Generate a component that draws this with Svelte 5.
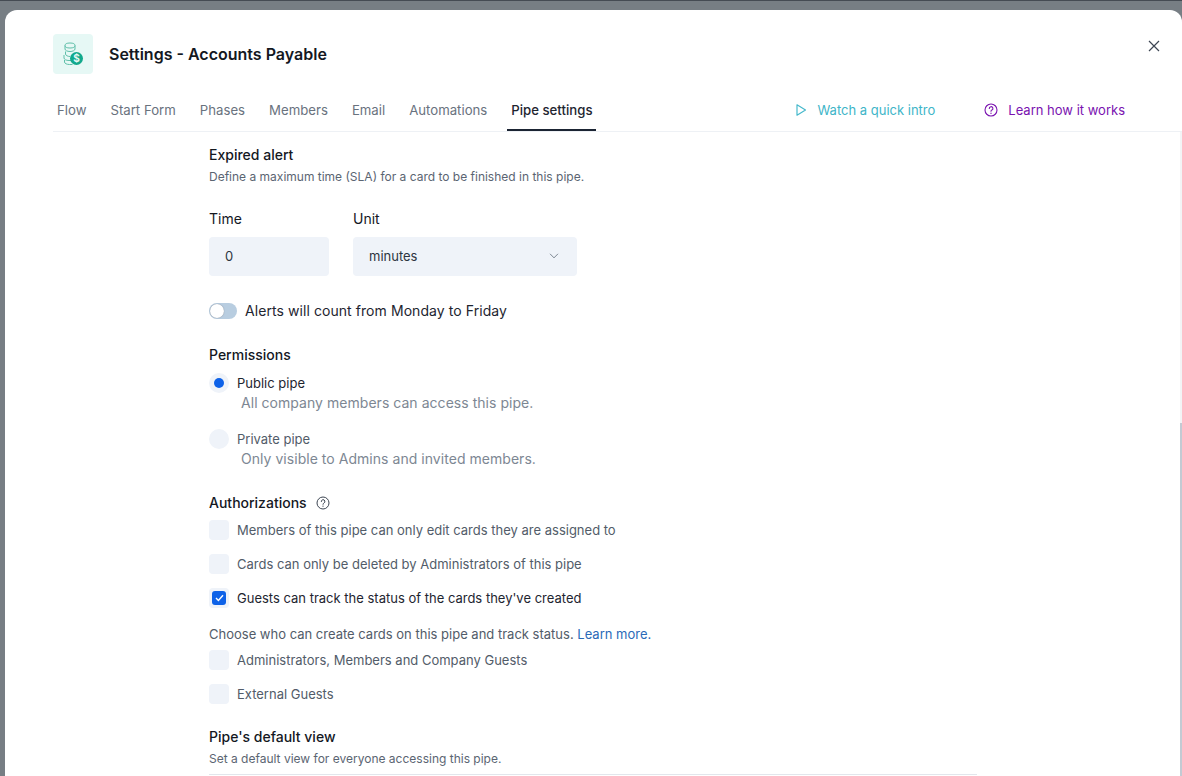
<script lang="ts">
  const tabs = ['Flow', 'Start Form', 'Phases', 'Members', 'Email', 'Automations', 'Pipe settings'];
  const active = 'Pipe settings';
  const topChecks = [
    { label: 'Members of this pipe can only edit cards they are assigned to', on: false },
    { label: 'Cards can only be deleted by Administrators of this pipe', on: false },
    { label: "Guests can track the status of the cards they've created", on: true }
  ];
  const createChecks = ['Administrators, Members and Company Guests', 'External Guests'];
</script>

<div class="backdrop">
  <div class="modal">
    <header class="head">
      <div class="title-row">
        <div class="logo">
          <svg width="24" height="24" viewBox="0 0 24 24" fill="none">
            <g stroke="#5fbfa9" stroke-width="1">
              <ellipse cx="9" cy="3.5" rx="5" ry="2.5" fill="#e6f8f5" />
              <path d="M4 3.5v3.5c0 1.4 2.2 2.5 5 2.5s5-1.1 5-2.5V3.5" />
              <path d="M4.5 9.5v2.5c0 1.4 2.2 2.5 4.5 2.5" />
              <path d="M3 13v3c0 1.4 2.2 2.5 5 2.5h2" />
              <path d="M3.5 18v2c0 1.4 2.2 2.5 5 2.5h3" />
            </g>
            <circle cx="15.5" cy="16.5" r="6.5" fill="#12a98c" />
            <text x="15.5" y="20" text-anchor="middle" class="dollar">$</text>
          </svg>
        </div>
        <h1>Settings - Accounts Payable</h1>
      </div>
      <button class="close" aria-label="Close">
        <svg width="12" height="12" viewBox="0 0 12 12" fill="none" stroke="#3d4653" stroke-width="1.2">
          <path d="M1 1l10 10M11 1L1 11" />
        </svg>
      </button>
      <nav class="tabs">
        {#each tabs as tab}
          <span class="tab" class:active={tab === active}>{tab}</span>
        {/each}
        <span class="spacer"></span>
        <span class="help intro">
          <svg width="12" height="14" viewBox="0 0 12 14" fill="none" stroke="#47b9cc" stroke-width="1.2" stroke-linejoin="round">
            <path d="M2 1.8v10.4L10.5 7z" />
          </svg>
          Watch a quick intro
        </span>
        <span class="help learn">
          <svg width="14" height="14" viewBox="0 0 14 14" fill="none" stroke="#7a12b0" stroke-width="1.1">
            <circle cx="7" cy="7" r="6" />
            <path d="M5.3 5.5a1.8 1.8 0 1 1 2.6 1.6c-.6.3-.9.7-.9 1.2" stroke-linecap="round" />
            <path d="M7 10v.4" stroke-linecap="round" />
          </svg>
          Learn how it works
        </span>
      </nav>
    </header>

    <main class="body">
      <section class="alert">
        <h2>Expired alert</h2>
        <p class="hint">Define a maximum time (SLA) for a card to be finished in this pipe.</p>
        <div class="fields">
          <div class="field time">
            <span class="field-label">Time</span>
            <div class="input">0</div>
          </div>
          <div class="field unit">
            <span class="field-label">Unit</span>
            <div class="input select">
              minutes
              <svg width="10" height="6" viewBox="0 0 10 6" fill="none" stroke="#7d8793" stroke-width="1">
                <path d="M1 .8l4 4 4-4" />
              </svg>
            </div>
          </div>
        </div>
        <div class="toggle-row">
          <span class="toggle"><span class="knob"></span></span>
          <span>Alerts will count from Monday to Friday</span>
        </div>
      </section>

      <section class="permissions">
        <h2>Permissions</h2>
        <div class="radio-row first">
          <span class="radio"><span class="dot"></span></span>
          <span class="opt on">Public pipe</span>
        </div>
        <p class="radio-desc">All company members can access this pipe.</p>
        <div class="radio-row second">
          <span class="radio"></span>
          <span class="opt">Private pipe</span>
        </div>
        <p class="radio-desc">Only visible to Admins and invited members.</p>
      </section>

      <section class="auth">
        <h2 class="with-icon">
          Authorizations
          <svg width="14" height="14" viewBox="0 0 14 14" fill="none" stroke="#3d4653" stroke-width="1">
            <circle cx="7" cy="7" r="6" />
            <path d="M5.3 5.5a1.8 1.8 0 1 1 2.6 1.6c-.6.3-.9.7-.9 1.2" stroke-linecap="round" />
            <path d="M7 10v.4" stroke-linecap="round" />
          </svg>
        </h2>
        <div class="checks">
          {#each topChecks as c}
            <div class="check-row">
              <span class="box">
                {#if c.on}
                  <span class="tick">
                    <svg width="9" height="8" viewBox="0 0 9 8" fill="none" stroke="#fff" stroke-width="1.4">
                      <path d="M1 4l2.4 2.4L8 1.2" />
                    </svg>
                  </span>
                {/if}
              </span>
              <span class="opt" class:on={c.on}>{c.label}</span>
            </div>
          {/each}
        </div>
        <p class="choose">Choose who can create cards on this pipe and track status. <span class="link">Learn more.</span></p>
        <div class="checks second">
          {#each createChecks as label}
            <div class="check-row">
              <span class="box"></span>
              <span class="opt">{label}</span>
            </div>
          {/each}
        </div>
      </section>

      <section class="view">
        <h2>Pipe's default view</h2>
        <p class="hint">Set a default view for everyone accessing this pipe.</p>
        <div class="view-select"></div>
      </section>
    </main>
    <div class="scrollbar"><div class="thumb"></div></div>
  </div>
</div>

<style>
  :global(body) {
    margin: 0;
    overflow: hidden;
  }
  .backdrop {
    height: 776px;
    box-sizing: border-box;
    padding: 9px 0 0 5px;
    background: #777e84;
    border-top: 1px solid #454b53;
    font-family: Inter, "Liberation Sans", sans-serif;
    overflow: hidden;
  }
  .modal {
    position: relative;
    height: 800px;
    background: #fff;
    border-radius: 12px 12px 0 0;
    overflow: hidden;
  }
  .head {
    position: relative;
    padding: 24px 0 0 48px;
  }
  .title-row {
    display: flex;
    align-items: center;
    gap: 16px;
  }
  .logo {
    width: 40px;
    height: 40px;
    border-radius: 4px;
    background: #e6f8f5;
    display: grid;
    place-items: center;
  }
  .dollar {
    font-size: 10px;
    font-weight: 700;
    fill: #e6f8f5;
    font-family: Inter, sans-serif;
  }
  h1 {
    margin: 0;
    font-size: 16px;
    font-weight: 600;
    color: #14181f;
  }
  .close {
    position: absolute;
    top: 30px;
    right: 22px;
    padding: 0;
    border: 0;
    background: none;
    line-height: 0;
  }
  .tabs {
    display: flex;
    align-items: flex-start;
    height: 38px;
    margin-top: 19px;
    padding-right: 57px;
    border-bottom: 1px solid #eef1f5;
    font-size: 13px;
    line-height: 20px;
    color: #69727e;
  }
  .tab {
    height: 38px;
    padding: 7px 4px 0;
    margin-right: 16px;
    box-sizing: border-box;
    font-size: 13.2px;
  }
  .tab.active {
    color: #1e2530;
    font-weight: 500;
    border-bottom: 2px solid #1b2433;
  }
  .spacer {
    flex: 1;
  }
  .help {
    display: flex;
    align-items: center;
    gap: 10px;
    padding-top: 7px;
  }
  .intro {
    color: #3eb5c8;
    margin-right: 49px;
  }
  .learn {
    color: #7a12b0;
  }
  .body {
    padding: 13px 0 0 204px;
    color: #14181f;
  }
  h2 {
    margin: 0;
    font-size: 14px;
    line-height: 20px;
    font-weight: 500;
    color: #14181f;
  }
  .hint {
    margin: 3px 0 0;
    font-size: 12px;
    line-height: 18px;
    color: #5b6572;
  }
  .fields {
    display: flex;
    gap: 24px;
    margin-top: 23px;
  }
  .field-label {
    display: block;
    font-size: 14px;
    line-height: 20px;
    margin-bottom: 8px;
  }
  .input {
    height: 39px;
    box-sizing: border-box;
    padding: 0 16px 2px;
    display: flex;
    align-items: center;
    justify-content: space-between;
    background: #eff3f9;
    border-radius: 4px;
    font-size: 13px;
    color: #2d3540;
  }
  .time .input {
    width: 120px;
  }
  .unit .input {
    width: 224px;
    padding-right: 18px;
  }
  .toggle-row {
    display: flex;
    align-items: center;
    gap: 8px;
    margin-top: 25px;
    font-size: 14px;
    line-height: 20px;
    letter-spacing: .07px;
    color: #1e2530;
  }
  .toggle {
    width: 28px;
    height: 16px;
    border-radius: 8px;
    background: #b8cde0;
    display: flex;
    align-items: center;
  }
  .knob {
    width: 14px;
    height: 14px;
    margin-left: 1px;
    border-radius: 50%;
    background: #fff;
    box-shadow: 0 0 1px #6a7480;
  }
  .permissions {
    margin-top: 24px;
  }
  .radio-row {
    display: flex;
    align-items: center;
    gap: 8px;
  }
  .radio-row.first {
    margin-top: 8px;
  }
  .radio-row.second {
    margin-top: 16px;
  }
  .radio {
    width: 20px;
    height: 20px;
    border-radius: 50%;
    background: #eff3f9;
    display: grid;
    place-items: center;
  }
  .dot {
    width: 10px;
    height: 10px;
    border-radius: 50%;
    background: #0e62e8;
  }
  .opt {
    font-size: 13px;
    line-height: 20px;
    color: #525c69;
  }
  .opt.on {
    color: #1e2530;
  }
  .radio-desc {
    margin: 0 0 0 32px;
    font-size: 14px;
    line-height: 20px;
    letter-spacing: .04px;
    color: #7d8793;
  }
  .auth {
    margin-top: 24px;
  }
  .with-icon {
    display: flex;
    align-items: center;
    gap: 9px;
  }
  .checks {
    display: flex;
    flex-direction: column;
    gap: 14px;
    margin-top: 7px;
  }
  .checks.second {
    margin-top: 6px;
  }
  .check-row {
    display: flex;
    align-items: center;
    gap: 8px;
  }
  .box {
    width: 20px;
    height: 20px;
    border-radius: 4px;
    background: #eff3f9;
    display: grid;
    place-items: center;
  }
  .tick {
    width: 14px;
    height: 14px;
    border-radius: 3px;
    background: #0e62e8;
    display: grid;
    place-items: center;
  }
  .choose {
    margin: 16px 0 0;
    font-size: 13px;
    line-height: 20px;
    color: #525c69;
  }
  .link {
    color: #2a6ab8;
  }
  .view {
    margin-top: 23px;
  }
  .view-select {
    width: 768px;
    height: 30px;
    margin-top: 6px;
    border-top: 1px solid #e2e6ec;
  }
  .scrollbar {
    position: absolute;
    right: 0;
    top: 122px;
    bottom: 0;
    width: 2px;
    background: #f3f4f6;
  }
  .thumb {
    height: 360px;
    margin-top: 291px;
    background: #c3cad3;
  }
</style>
